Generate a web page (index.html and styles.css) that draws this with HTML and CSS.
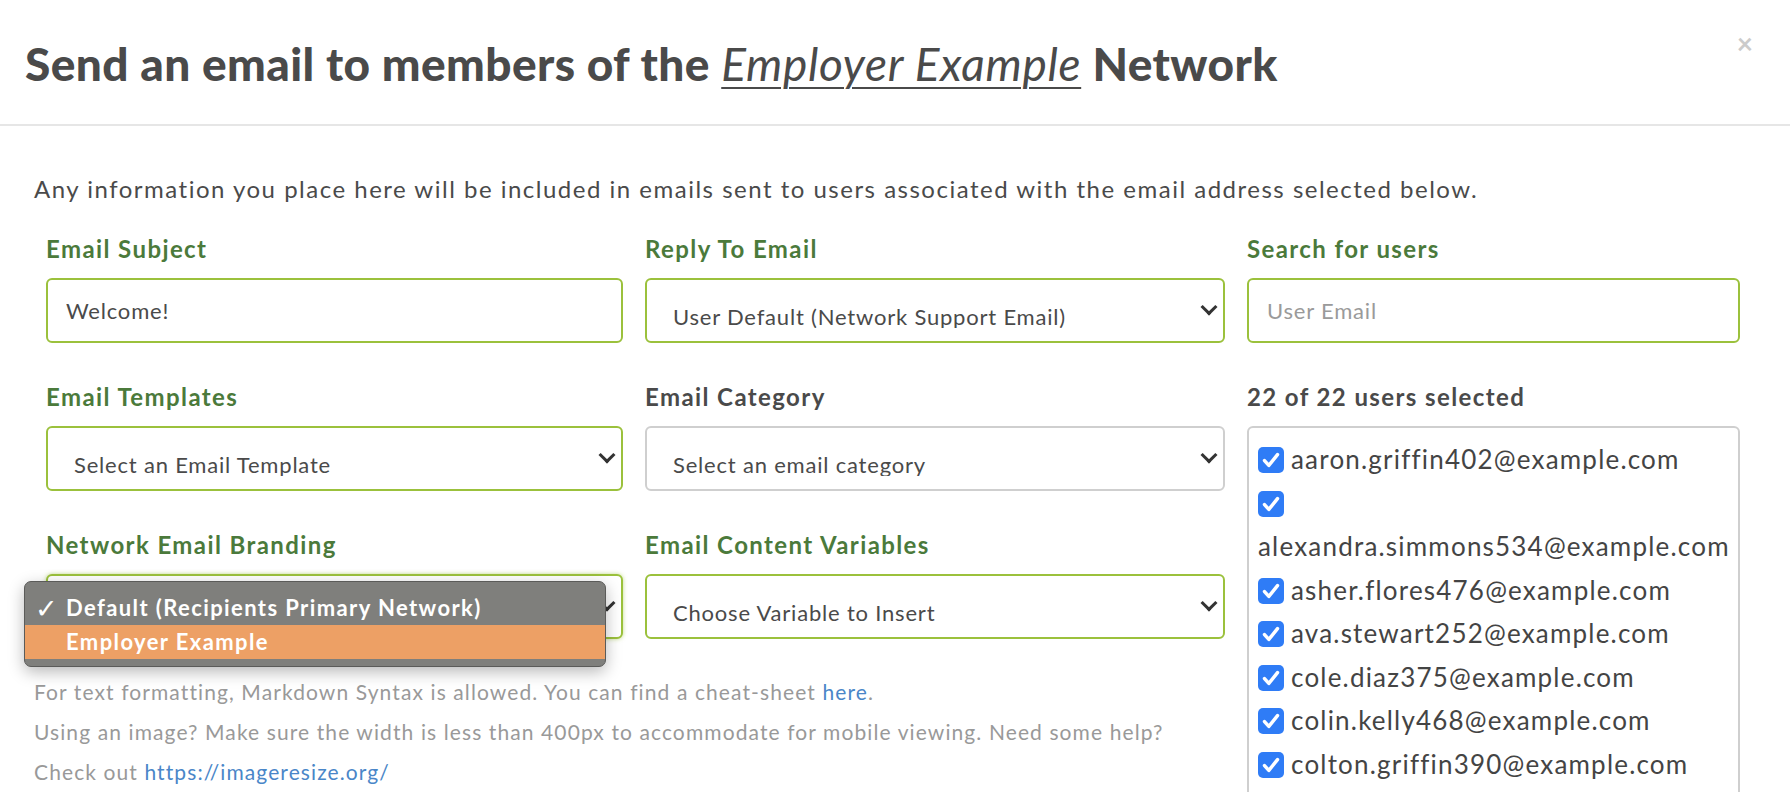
FILE: index.html
```html
<!DOCTYPE html>
<html>
<head>
  <title>Send an email</title>
  <link rel="stylesheet" href="styles.css">
</head>
<body>
  <div class="modal">
    <div class="modal-header">
      <h1>Send an email to members of the <em>Employer Example</em> Network</h1>
      <span class="close">&times;</span>
    </div>

    <div class="modal-body">
      <p class="intro">Any information you place here will be included in emails sent to users associated with the email address selected below.</p>

      <div class="layout">
        <div class="main-col">
          <div class="fields">
            <div class="field">
              <label class="field-label">Email Subject</label>
              <input class="input" type="text" value="Welcome!">
            </div>
            <div class="field">
              <label class="field-label">Reply To Email</label>
              <div class="select"><span class="select-value">User Default (Network Support Email)</span></div>
            </div>
            <div class="field">
              <label class="field-label">Email Templates</label>
              <div class="select"><span class="select-value">Select an Email Template</span></div>
            </div>
            <div class="field">
              <label class="field-label plain">Email Category</label>
              <div class="select grey"><span class="select-value">Select an email category</span></div>
            </div>
            <div class="field">
              <label class="field-label">Network Email Branding</label>
              <div class="select focused">
                <span class="select-value">Default (Recipients Primary Network)</span>
                <!-- open native menu -->
                <ul class="menu">
                  <li class="checked"><span class="tick">&#10003;</span>Default (Recipients Primary Network)</li>
                  <li class="active">Employer Example</li>
                </ul>
              </div>
            </div>
            <div class="field">
              <label class="field-label">Email Content Variables</label>
              <div class="select"><span class="select-value">Choose Variable to Insert</span></div>
            </div>
          </div>

          <div class="help">
            <p>For text formatting, Markdown Syntax is allowed. You can find a cheat-sheet <a href="#">here</a>.</p>
            <p>Using an image? Make sure the width is less than 400px to accommodate for mobile viewing. Need some help?<br>Check out <a href="#">https://imageresize.org/</a></p>
          </div>
        </div>

        <div class="side-col">
          <div class="field">
            <label class="field-label">Search for users</label>
            <input class="input" type="text" placeholder="User Email">
          </div>
          <div class="field">
            <label class="field-label plain">22 of 22 users selected</label>
            <div class="user-list">
              <label class="user"><span class="check"></span>aaron.griffin402@example.com</label>
              <label class="user"><span class="check"></span> alexandra.simmons534@example.com</label>
              <label class="user"><span class="check"></span>asher.flores476@example.com</label>
              <label class="user"><span class="check"></span>ava.stewart252@example.com</label>
              <label class="user"><span class="check"></span>cole.diaz375@example.com</label>
              <label class="user"><span class="check"></span>colin.kelly468@example.com</label>
              <label class="user"><span class="check"></span>colton.griffin390@example.com</label>
              <label class="user"><span class="check"></span>daniel.ross118@example.com</label>
              <label class="user"><span class="check"></span>dylan.hughes207@example.com</label>
            </div>
          </div>
        </div>
      </div>
    </div>
  </div>
</body>
</html>
```

FILE: styles.css
```css
html, body {
  height: 100%;
  overflow: hidden;
}
body {
  margin: 0;
  background: #fff;
  font-family: Lato, 'Open Sans', sans-serif;
  color: #4a4a4a;
}
.modal {
  background: #fff;
}
.modal-header {
  position: relative;
  height: 126px;
  border-bottom: 2px solid #e6e6e6;
  box-sizing: border-box;
  padding: 35px 0 0 25px;
}
.modal-header h1 {
  margin: 0;
  font-size: 46px;
  font-weight: 900;
  line-height: 58px;
  color: #4a4a4a;
  letter-spacing: 0.4px;
}
.modal-header h1 em {
  font-weight: 400;
  letter-spacing: 0.7px;
  text-decoration: underline;
  text-decoration-thickness: 2px;
  text-underline-offset: 6px;
}
.close {
  position: absolute;
  top: 26px;
  right: 37px;
  font-size: 28px;
  font-weight: 700;
  color: #cbcbcb;
}

.modal-body {
  padding: 48px 0 0 34px;
}
.intro {
  margin: 0 0 30px;
  font-size: 24px;
  line-height: 30px;
  letter-spacing: 1.5px;
}

.layout {
  display: grid;
  grid-template-columns: 1191px 493px;
  column-gap: 22px;
}
.fields {
  display: grid;
  grid-template-columns: 577px 580px;
  column-gap: 22px;
  row-gap: 39px;
  padding-left: 12px;
}
.side-col {
  display: flex;
  flex-direction: column;
  gap: 39px;
}
.field {
  display: flex;
  flex-direction: column;
  gap: 14px;
}
.field-label {
  font-size: 24px;
  font-weight: 700;
  line-height: 30px;
  letter-spacing: 1.4px;
  color: #4b7a3b;
}
.field-label.plain {
  color: #4a4a4a;
}

.input,
.select {
  box-sizing: border-box;
  height: 65px;
  border: 2px solid #9bc13c;
  border-radius: 6px;
  background: #fff;
  font-family: inherit;
  font-size: 22px;
  letter-spacing: 0.8px;
  color: #4a4a4a;
}
.input {
  width: 100%;
  padding: 0 18px;
  outline: none;
}
.input::placeholder {
  color: #9a9a9a;
}
.select {
  position: relative;
  padding: 22px 40px 0 26px;
}
.select::after {
  content: "";
  position: absolute;
  right: 8px;
  top: 21px;
  width: 9px;
  height: 9px;
  border-right: 3px solid #333;
  border-bottom: 3px solid #333;
  transform: rotate(45deg);
}
.select.grey {
  border-color: #cfcfcf;
}
.select.focused {
  box-shadow: 0 0 4px rgba(155, 193, 60, 0.6);
}
.select-value {
  display: block;
  height: 26px;
  line-height: 30px;
  overflow: hidden;
  white-space: nowrap;
}

.menu {
  position: absolute;
  left: -24px;
  top: 5px;
  z-index: 2;
  width: 582px;
  margin: 0;
  padding: 9px 0 7px;
  list-style: none;
  box-sizing: border-box;
  background: #7f7f7c;
  border: 1px solid #5b5b59;
  border-radius: 7px;
  box-shadow: 0 5px 16px rgba(0, 0, 0, 0.28);
  color: #fff;
  font-size: 22px;
  font-weight: 700;
  letter-spacing: 1.4px;
}
.menu li {
  height: 34px;
  line-height: 34px;
  padding-left: 41px;
  position: relative;
}
.menu li.active {
  background: #eda065;
}
.tick {
  position: absolute;
  left: 10px;
  font-size: 27px;
  font-weight: 400;
}

.help {
  padding-top: 33px;
  font-size: 21px;
  line-height: 40px;
  letter-spacing: 1.1px;
  color: #999;
}
.help p {
  margin: 0;
}
.help a {
  color: #4a86c8;
  text-decoration: none;
}

.user-list {
  border: 2px solid #cfcfcf;
  border-radius: 6px;
  padding: 10px 4px 0 9px;
  height: 420px;
  font-size: 26px;
  line-height: 43.5px;
  letter-spacing: 1.2px;
  font-variant-ligatures: none;
  color: #444;
}
.user {
  display: block;
}
.check {
  display: inline-block;
  width: 26px;
  height: 26px;
  margin-right: 7px;
  vertical-align: -4px;
  border-radius: 5px;
  background: #2f7cf6 url("data:image/svg+xml,%3Csvg xmlns='http://www.w3.org/2000/svg' viewBox='0 0 24 24'%3E%3Cpath d='M6 12.5l4 4.5 8-10' fill='none' stroke='white' stroke-width='3.2' stroke-linecap='round' stroke-linejoin='round'/%3E%3C/svg%3E") center / 26px 26px no-repeat;
}
```
